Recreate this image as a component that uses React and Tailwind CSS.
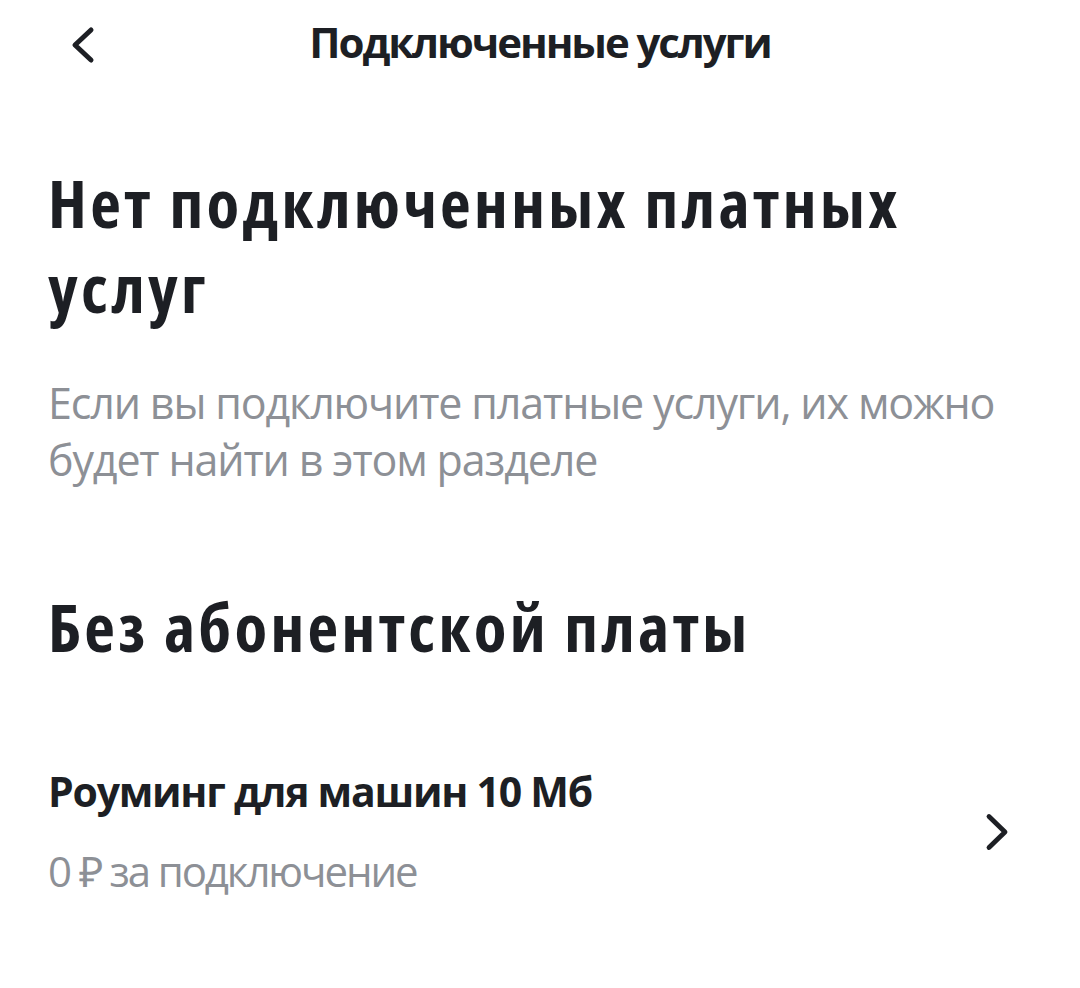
function BackIcon() {
    return (
        <svg width="32" height="44" viewBox="0 0 32 44" fill="none">
            <path d="M23 7 L7 22 L23 37" stroke="#1d1f24" strokeWidth="5" strokeLinecap="round" strokeLinejoin="round" />
        </svg>
    );
}

function ArrowIcon() {
    return (
        <svg width="28" height="44" viewBox="0 0 28 44" fill="none">
            <path d="M7 6.5 L23 22 L7 37.5" stroke="#1d1f24" strokeWidth="4.8" strokeLinecap="round" strokeLinejoin="round" />
        </svg>
    );
}

export default function App() {
    return (
        <div className="w-[1080px] h-[988px] bg-white text-[#1d1f24] font-['Open_Sans',sans-serif] overflow-hidden">
            {/* Header */}
            <header className="relative flex justify-center pt-[14px]">
                <button className="absolute left-[68px] top-[23px]">
                    <BackIcon />
                </button>
                <h1 className="text-[42px] leading-[56px] font-bold tracking-[-2.1px] whitespace-nowrap">Подключенные услуги</h1>
            </header>

            <main className="px-[48px]">
                <h2 className="mt-[90px] text-[67px] leading-[85px] font-bold font-stretch-condensed tracking-[3.35px] whitespace-nowrap">
                    Нет подключенных платных
                    <br />
                    услуг
                </h2>
                <p className="mt-[44px] text-[43px] leading-[57px] text-[#8d9096] tracking-[-1.15px] whitespace-nowrap">
                    Если вы подключите платные услуги, их можно
                    <br />
                    будет найти в этом разделе
                </p>

                <h3 className="mt-[98px] text-[67px] leading-[80px] font-bold font-stretch-condensed tracking-[3.3px] whitespace-nowrap">Без абонентской платы</h3>

                <div className="mt-[99px] flex items-center justify-between">
                    <div className="flex flex-col gap-[27px]">
                        <span className="text-[41px] leading-[52px] font-bold tracking-[-1.25px] whitespace-nowrap">Роуминг для машин 10 Мб</span>
                        <span className="text-[42px] leading-[54px] text-[#8d9096] tracking-[-2.1px] whitespace-nowrap">0 ₽ за подключение</span>
                    </div>
                    <div className="mr-[22px]">
                        <ArrowIcon />
                    </div>
                </div>
            </main>
        </div>
    );
}
